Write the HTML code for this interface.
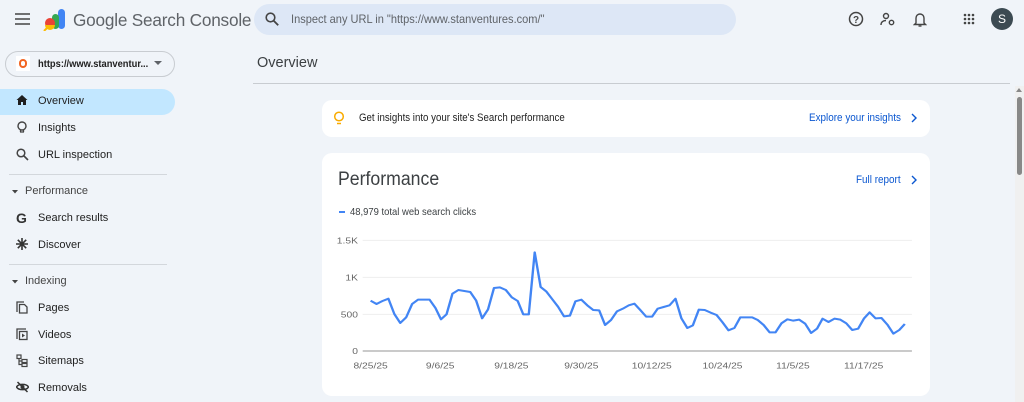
<!DOCTYPE html>
<html><head><meta charset="utf-8"><style>
*{box-sizing:border-box;margin:0;padding:0}
body{width:1024px;height:402px;overflow:hidden;background:#f0f4f9;font-family:"Liberation Sans",sans-serif;color:#1f1f1f;position:relative}
.a{position:absolute}
.nav{position:absolute;left:0;width:175px;height:26px;font-size:11px;color:#1f1f1f}
.nav svg{position:absolute;left:16px;top:6px}
.nav span{position:absolute;left:38px;top:7px}
.hdr{position:absolute;left:11px;font-size:11px;color:#444}
.div{position:absolute;left:9px;width:158px;height:1px;background:#d3d7dc}
</style></head><body>
<svg class="a" style="left:15px;top:13px" width="15" height="12"><path d="M0 1h15M0 6h15M0 11h15" stroke="#444" stroke-width="1.6"/></svg>
<svg class="a" style="left:43px;top:9px" width="24" height="22" viewBox="0 0 24 22"><rect x="15" y="0" width="7" height="20" rx="3.5" fill="#4285f4"/><rect x="9" y="5" width="7" height="15" rx="3.5" fill="#34a853"/><circle cx="7" cy="14" r="5" fill="#ea4335"/><path d="M2 16 a5 5 0 0 0 10 0z" fill="#fbbc04"/><path d="M1 22l4-4" stroke="#fbbc04" stroke-width="2"/></svg>
<div class="a" style="left:73px;top:10px;font-size:17.2px;color:#5f6368;letter-spacing:-0.2px">Google Search Console</div>
<div class="a" style="left:254px;top:4px;width:482px;height:31px;border-radius:16px;background:#dde7f6"></div>
<svg class="a" style="left:265px;top:12px" width="14" height="14"><circle cx="5.5" cy="5.5" r="4.3" fill="none" stroke="#444" stroke-width="1.6"/><path d="M8.7 8.7l4.5 4.5" stroke="#444" stroke-width="1.8"/></svg>
<div class="a" style="left:291px;top:12px;font-size:12px;color:#5f6368;transform:scaleX(.92);transform-origin:left">Inspect any URL in "https://www.stanventures.com/"</div>
<svg class="a" style="left:848px;top:11px" width="16" height="16"><circle cx="8" cy="8" r="6.5" fill="none" stroke="#444" stroke-width="1.5"/><text x="8" y="12" font-size="10" text-anchor="middle" fill="#444" font-family="Liberation Sans" font-weight="bold">?</text></svg>
<svg class="a" style="left:880px;top:11px" width="16" height="16"><circle cx="6" cy="5" r="2.5" fill="none" stroke="#444" stroke-width="1.4"/><path d="M1 14c0-3 2-4.5 5-4.5" fill="none" stroke="#444" stroke-width="1.4"/><circle cx="11.5" cy="11.5" r="2.2" fill="none" stroke="#444" stroke-width="1.4"/></svg>
<svg class="a" style="left:913px;top:11px" width="14" height="16"><path d="M3 12V7a4 4 0 0 1 8 0v5l1.5 1.5h-11z" fill="none" stroke="#444" stroke-width="1.4"/><path d="M5.5 15h3" stroke="#444" stroke-width="1.4"/></svg>
<svg class="a" style="left:963px;top:13px" width="12" height="12"><g fill="#444"><circle cx="2" cy="2" r="1.3"/><circle cx="6" cy="2" r="1.3"/><circle cx="10" cy="2" r="1.3"/><circle cx="2" cy="6" r="1.3"/><circle cx="6" cy="6" r="1.3"/><circle cx="10" cy="6" r="1.3"/><circle cx="2" cy="10" r="1.3"/><circle cx="6" cy="10" r="1.3"/><circle cx="10" cy="10" r="1.3"/></g></svg>
<div class="a" style="left:991px;top:8px;width:22px;height:22px;border-radius:50%;background:#3c4a52;color:#fff;font-size:12px;text-align:center;line-height:22px">S</div>
<div class="a" style="left:5px;top:51px;width:170px;height:26px;border:1px solid #c8ccd1;border-radius:13px"></div>
<div class="a" style="left:16px;top:56px;width:14px;height:15px;background:#fff"></div>
<div class="a" style="left:19px;top:59px;width:8px;height:9px;border:2px solid #f26522;border-radius:4px"></div>
<div class="a" style="left:38px;top:58px;font-size:10.5px;font-weight:bold;color:#1f1f1f;transform:scaleX(.89);transform-origin:left">https://www.stanventur...</div>
<svg class="a" style="left:154px;top:61px" width="8" height="5"><path d="M0 0h8L4 4z" fill="#5f6368"/></svg>
<div class="a" style="left:0;top:89px;width:175px;height:26px;background:#c2e7ff;border-radius:0 13px 13px 0"></div>
<div class="nav" style="top:88px"><svg width="12" height="12"><path d="M6 1L0.5 6H2v5h3V8h2v3h3V6h1.5z" fill="#1f1f1f"/></svg><span>Overview</span></div>
<div class="nav" style="top:115px"><svg width="12" height="14"><circle cx="6" cy="5" r="4" fill="none" stroke="#444" stroke-width="1.4"/><path d="M4 11h4M4.5 9v2M7.5 9v2" stroke="#444" stroke-width="1.3"/></svg><span>Insights</span></div>
<div class="nav" style="top:142px"><svg width="13" height="13"><circle cx="5" cy="5" r="3.8" fill="none" stroke="#444" stroke-width="1.5"/><path d="M8 8l4 4" stroke="#444" stroke-width="1.6"/></svg><span>URL inspection</span></div>
<div class="div" style="top:174px"></div>
<svg class="a" style="left:12px;top:190px" width="6" height="4"><path d="M0 0h6L3 3.5z" fill="#444"/></svg>
<div class="hdr" style="left:25px;top:185px">Performance</div>
<div class="nav" style="top:205px"><svg width="12" height="13"><text x="0" y="12" font-size="14" font-weight="bold" fill="#333" font-family="Liberation Sans">G</text></svg><span>Search results</span></div>
<div class="nav" style="top:232px"><svg width="12" height="12"><path d="M6 0v12M0 6h12M1.8 1.8l8.4 8.4M10.2 1.8l-8.4 8.4" stroke="#333" stroke-width="1.6"/></svg><span>Discover</span></div>
<div class="div" style="top:264px"></div>
<svg class="a" style="left:12px;top:280px" width="6" height="4"><path d="M0 0h6L3 3.5z" fill="#444"/></svg>
<div class="hdr" style="left:25px;top:275px">Indexing</div>
<div class="nav" style="top:295px"><svg width="12" height="13"><path d="M1 11V1h7" fill="none" stroke="#444" stroke-width="1.3"/><path d="M3.5 3.5h5l2.5 2.5v6h-7.5z" fill="none" stroke="#444" stroke-width="1.3"/></svg><span>Pages</span></div>
<div class="nav" style="top:322px"><svg width="12" height="13"><path d="M1 11V1h9" fill="none" stroke="#444" stroke-width="1.3"/><rect x="3.5" y="3.5" width="7.5" height="8" fill="none" stroke="#444" stroke-width="1.3"/><path d="M6 5.5v4l3-2z" fill="#444"/></svg><span>Videos</span></div>
<div class="nav" style="top:348px"><svg width="12" height="14"><rect x="1" y="1" width="4" height="3.5" fill="none" stroke="#444" stroke-width="1.2"/><path d="M3 4.5v6h3M3 7h3" stroke="#444" stroke-width="1.2" fill="none"/><rect x="6" y="5.5" width="5" height="3" fill="none" stroke="#444" stroke-width="1.2"/><rect x="6" y="9.5" width="5" height="3" fill="none" stroke="#444" stroke-width="1.2"/></svg><span>Sitemaps</span></div>
<div class="nav" style="top:375px"><svg width="13" height="12"><path d="M0.5 6C2.5 2.5 10.5 2.5 12.5 6 10.5 9.5 2.5 9.5 0.5 6z" fill="none" stroke="#333" stroke-width="1.5"/><circle cx="6.5" cy="6" r="2" fill="#333"/><path d="M1.5 1l10 10" stroke="#333" stroke-width="1.5"/></svg><span>Removals</span></div>
<div class="a" style="left:257px;top:55px;font-size:14.5px;color:#3c4043">Overview</div>
<div class="a" style="left:253px;top:83px;width:757px;height:1px;background:#c8ccd1"></div>
<div class="a" style="left:1015px;top:86px;width:9px;height:316px;background:#f0f0f0"></div>
<svg class="a" style="left:1016px;top:88px" width="7" height="5"><path d="M0 4h6L3 0z" fill="#888"/></svg>
<div class="a" style="left:1017px;top:97px;width:5px;height:78px;background:#888;border-radius:3px"></div>
<div class="a" style="left:322px;top:100px;width:608px;height:37px;background:#fff;border-radius:10px"></div>
<svg class="a" style="left:333px;top:111px" width="12" height="15"><circle cx="6" cy="5.5" r="4.3" fill="none" stroke="#f9ab00" stroke-width="1.5"/><path d="M4 12.5h4" stroke="#f9ab00" stroke-width="1.5"/></svg>
<div class="a" style="left:359px;top:112px;font-size:11px;color:#1f1f1f;transform:scaleX(.88);transform-origin:left">Get insights into your site's Search performance</div>
<div class="a" style="left:809px;top:112px;font-size:11px;color:#0b57d0;transform:scaleX(.9);transform-origin:left">Explore your insights</div>
<svg class="a" style="left:911px;top:113px" width="6" height="10"><path d="M1 1l4 4-4 4" fill="none" stroke="#0b57d0" stroke-width="1.4"/></svg>
<div class="a" style="left:322px;top:153px;width:608px;height:243px;background:#fff;border-radius:10px"></div>
<div class="a" style="left:338px;top:169px;font-size:19px;color:#3c4043;transform:scaleX(.93);transform-origin:left">Performance</div>
<div class="a" style="left:856px;top:174px;font-size:11px;color:#0b57d0;transform:scaleX(.9);transform-origin:left">Full report</div>
<svg class="a" style="left:911px;top:175px" width="6" height="10"><path d="M1 1l4 4-4 4" fill="none" stroke="#0b57d0" stroke-width="1.4"/></svg>
<div class="a" style="left:339px;top:211px;width:6px;height:2px;background:#4285f4"></div>
<div class="a" style="left:350px;top:206px;font-size:10.5px;color:#3c4043;transform:scaleX(.9);transform-origin:left">48,979 total web search clicks</div>
<svg class="a" style="left:320px;top:220px" width="620" height="182" viewBox="0 0 1568 546" preserveAspectRatio="none">
<g stroke="#eeeeee" stroke-width="3"><path d="M108 61H1497M108 172H1497M108 283H1497"/></g>
<path d="M108 393H1497" stroke="#aaa" stroke-width="4"/>
<g font-family="Liberation Sans" font-size="26" fill="#666" text-anchor="end"><text x="96" y="70">1.5K</text><text x="96" y="181">1K</text><text x="96" y="292">500</text><text x="96" y="402">0</text></g>
<g font-family="Liberation Sans" font-size="26" fill="#666" text-anchor="middle"><text x="128" y="446">8/25/25</text><text x="304" y="446">9/6/25</text><text x="484" y="446">9/18/25</text><text x="661" y="446">9/30/25</text><text x="839" y="446">10/12/25</text><text x="1018" y="446">10/24/25</text><text x="1196" y="446">11/5/25</text><text x="1375" y="446">11/17/25</text></g>
<polyline fill="none" stroke="#4285f4" stroke-width="6" stroke-linejoin="round" points="128,242 143,252 158,243 173,236 188,282 203,309 218,292 233,252 248,239 263,239 277,239 292,264 306,298 320,283 335,221 350,210 365,213 380,216 395,242 410,295 425,268 440,204 455,202 470,210 485,232 500,243 514,283 528,283 543,97 558,201 572,214 587,237 602,260 617,289 632,287 646,244 661,239 676,256 691,270 706,271 721,315 736,300 751,274 766,266 781,256 795,251 810,270 825,290 840,290 854,266 869,261 884,256 899,236 914,295 929,324 943,316 958,269 973,270 988,278 1003,285 1018,307 1033,331 1048,324 1063,292 1078,292 1093,292 1107,300 1122,315 1137,337 1152,337 1167,310 1182,298 1197,302 1212,299 1227,311 1242,339 1257,326 1271,296 1286,306 1301,296 1316,299 1331,310 1346,330 1361,326 1376,295 1390,277 1405,295 1420,294 1435,314 1450,341 1465,330 1479,312"/>
</svg>
</body></html>
